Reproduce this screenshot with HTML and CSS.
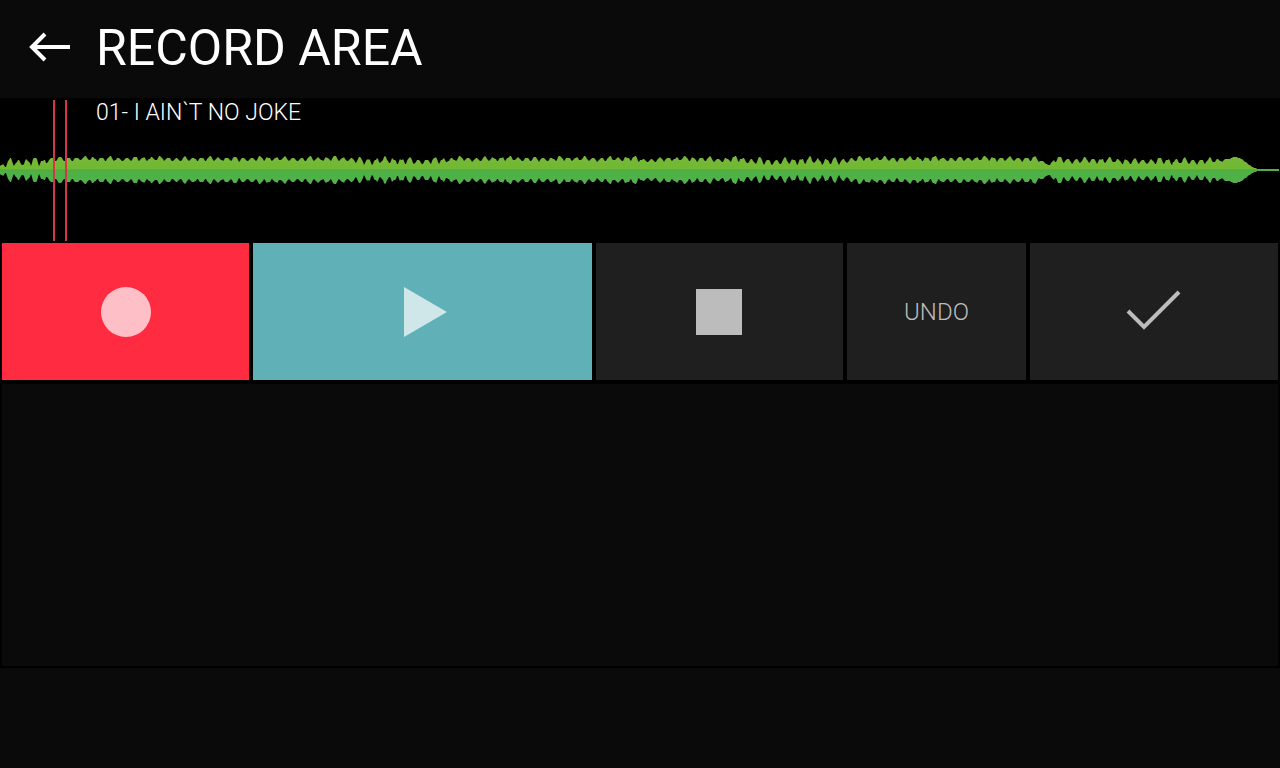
FILE: index.html
```html
<!DOCTYPE html>
<html lang="en">
<head>
    <meta charset="UTF-8">
    <meta name="viewport" content="width=device-width, initial-scale=1.0">
    <title>Record area</title>
    <link rel="stylesheet" href="styles.css">
</head>
<body>
    <header class="header">
        <button class="back" type="button" aria-label="Back">
            <svg width="44" height="32" viewBox="0 0 44 32">
                <path d="M17 2 L4 15 L17 28 M4 15 H42" fill="none" stroke="#fff" stroke-width="4"/>
            </svg>
        </button>
        <h1>RECORD AREA</h1>
    </header>
    <section class="track">
        <p class="track-name">01- I AIN`T NO JOKE</p>
        <svg class="wave" viewBox="0 0 1280 30" preserveAspectRatio="none">
            <defs>
                <linearGradient id="waveFill" gradientUnits="userSpaceOnUse" x1="0" y1="0" x2="0" y2="30">
                    <stop offset="0" stop-color="#78b83c"/>
                    <stop offset="0.46" stop-color="#6fb933"/>
                    <stop offset="0.5" stop-color="#55a83f"/>
                    <stop offset="0.56" stop-color="#4bb245"/>
                    <stop offset="1" stop-color="#55b04b"/>
                </linearGradient>
            </defs>
            <path id="wavePath" fill="url(#waveFill)"/>
        </svg>
        <div class="cursor cursor-start"></div>
        <div class="cursor cursor-end"></div>
    </section>
    <div class="controls">
        <button class="control record" type="button" aria-label="Record">
            <svg width="50" height="50" viewBox="0 0 50 50"><circle cx="25" cy="25" r="25" fill="#ffbfc7"/></svg>
        </button>
        <button class="control play" type="button" aria-label="Play">
            <svg width="50" height="50" viewBox="0 0 50 50"><path d="M6 0 L49 25 L6 50 Z" fill="#cfe7e9"/></svg>
        </button>
        <button class="control" type="button" aria-label="Stop">
            <svg width="50" height="50" viewBox="0 0 50 50"><rect x="1" y="2" width="46" height="46" fill="#bcbcbc"/></svg>
        </button>
        <button class="control" type="button">UNDO</button>
        <button class="control" type="button" aria-label="Done">
            <svg width="56" height="50" viewBox="0 0 56 50">
                <path d="M2 24 L18 40 L53 5" fill="none" stroke="#bcbcbc" stroke-width="4"/>
            </svg>
        </button>
    </div>
    <main class="panel"></main>
    <footer class="footer"></footer>
    <script>
        // x, lowest and highest half-height of the wave
        const levels = [
            [0, 1, 6], [8, 2, 12], [44, 3, 13], [50, 8, 14], [150, 8, 14],
            [350, 8, 14], [364, 4, 14], [440, 5, 13], [460, 8, 14], [635, 8, 14],
            [642, 7, 12], [670, 8, 14], [740, 7, 14], [750, 4, 13], [840, 4, 14],
            [860, 8, 14], [1035, 8, 14], [1050, 4, 6], [1054, 6, 14],
            [1120, 5, 13], [1160, 4, 13], [1210, 5, 13], [1224, 8, 11],
            [1234, 13, 13], [1240, 12, 12], [1247, 7, 7], [1252, 3, 3],
            [1258, 1, 1], [1279, 1, 1]
        ];

        // 1 at each multiple of the period, 0 half way between
        function spike(x, period) {
            const t = Math.abs(x) / period % 1;
            return Math.abs(1 - 2 * t);
        }

        function halfHeight(x) {
            let i = 0;
            while (i < levels.length - 2 && levels[i + 1][0] <= x) i++;
            const [x1, low1, high1] = levels[i];
            const [x2, low2, high2] = levels[i + 1];
            const t = (x - x1) / (x2 - x1);
            const low = low1 + (low2 - low1) * t;
            const high = high1 + (high2 - high1) * t;
            const beat = Math.pow(spike(x - 10, 25), 4);
            const ripple = Math.min(1, spike(x - 10, 8.33) * 1.4);
            const small = spike(x, 3.7) * Math.abs(Math.sin(x / 19));
            return low + (high - low) * Math.min(1, beat * 0.3 + ripple * 0.6 + small * 0.25);
        }

        const upper = [];
        const lower = [];
        for (let x = 0; x < 1280; x++) {
            const h = Math.round(halfHeight(x));
            upper.push(`${x},${15 - h}`);
            lower.unshift(`${x},${15 + h}`);
        }
        document.getElementById('wavePath').setAttribute('d', 'M' + upper.concat(lower).join(' L') + ' Z');
    </script>
</body>
</html>
```
FILE: styles.css
```css
* {
    box-sizing: border-box;
}
body {
    display: flex;
    flex-direction: column;
    min-height: 100vh;
    margin: 0;
    font-family: Roboto, sans-serif;
    background-color: #000;
    color: #fff;
}
button {
    padding: 0;
    border: none;
    cursor: pointer;
}
.header {
    display: flex;
    align-items: center;
    gap: 24px;
    height: 98px;
    padding: 0 28px 2px;
    background-color: #0a0a0a;
}
.back {
    display: flex;
    width: 44px;
    background: none;
}
h1 {
    margin: 0;
    font-size: 50px;
    font-weight: 400;
    line-height: 56px;
}
.track {
    position: relative;
    height: 143px;
}
.track-name {
    margin: 0;
    padding-left: 96px;
    font-size: 23px;
    font-weight: 300;
    line-height: 30px;
}
.wave {
    display: block;
    width: 100%;
    height: 30px;
    margin-top: 27px;
}
/* Границы выделенного фрагмента */
.cursor {
    position: absolute;
    top: 2px;
    bottom: 0;
    width: 2px;
    background-color: #d5354a;
}
.cursor-start {
    left: 53px;
}
.cursor-end {
    left: 65px;
}
.controls {
    display: grid;
    grid-template-columns: 247fr 339fr 247fr 179fr 248fr;
    gap: 4px;
    padding: 2px;
}
.control {
    display: flex;
    align-items: center;
    justify-content: center;
    height: 137px;
    font-family: inherit;
    font-size: 24px;
    font-weight: 300;
    color: #bcbcbc;
    background-color: #1f1f1f;
}
.record {
    background-color: #ff2c41;
}
.play {
    background-color: #5fb0b7;
}
.panel {
    flex: 1;
    margin: 2px;
    background-color: #0a0a0a;
}
.footer {
    height: 100px;
    background-color: #0a0a0a;
}
```
